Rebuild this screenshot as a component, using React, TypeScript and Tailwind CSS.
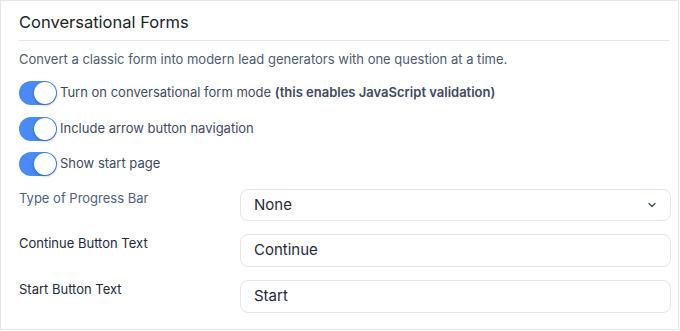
import React from "react";

function Toggle() {
  return (
    <span className="relative inline-flex h-[24px] w-[38px] shrink-0 items-center rounded-full bg-[#4a8af4]">
      <span className="absolute right-[1px] top-[1px] h-[22px] w-[22px] rounded-full bg-white shadow-[0_1px_3px_rgba(0,0,0,0.35)]" />
    </span>
  );
}

function ToggleRow({ children }: { children: React.ReactNode }) {
  return (
    <div className="flex h-[24px] items-center gap-[3px]">
      <Toggle />
      <span className="text-[13px] text-[#3f4a5c]">{children}</span>
    </div>
  );
}

function Field({ label, labelClass, children }: { label: string; labelClass: string; children: React.ReactNode }) {
  return (
    <div className="flex items-start">
      <div className={`w-[221px] shrink-0 text-[13px] leading-[18px] ${labelClass}`}>{label}</div>
      <div className="flex-1">{children}</div>
    </div>
  );
}

export default function App() {
  return (
    <div className="h-[331px] w-[680px] bg-white" style={{ fontFamily: "Inter, 'Noto Sans', sans-serif" }}>
      <div className="h-[330px] w-[679px] border border-[#e6e6e6] bg-white pl-[18px] pr-[7px]">
        <div className="flex h-[39px] items-center pt-[3px] text-[16.5px] text-[#1d2327]">Conversational Forms</div>
        <div className="mr-[1px] h-px bg-[#e6e6e6]" />
        <div className="mt-[9px] text-[13px] leading-[18px] text-[#4f5b6d]">
          Convert a classic form into modern lead generators with one question at a time.
        </div>
        <div className="mt-[13px] flex flex-col gap-[11.5px]">
          <ToggleRow>
            Turn on conversational form mode <b className="font-semibold text-[#3f4a5c]">(this enables JavaScript validation)</b>
          </ToggleRow>
          <ToggleRow>Include arrow button navigation</ToggleRow>
          <ToggleRow>Show start page</ToggleRow>
        </div>
        <div className="mt-[13px] flex flex-col gap-[13px]">
          <Field label="Type of Progress Bar" labelClass="text-[#52607a]">
            <div className="flex h-[32px] items-center justify-between rounded-[8px] border border-[#e5e7eb] pl-[13px] pr-[12px] text-[15px] text-[#1f2937]">
              <span>None</span>
              <svg width="12" height="12" viewBox="0 0 24 24" fill="none" stroke="#3f4a5c" strokeWidth="2.5" strokeLinecap="round" strokeLinejoin="round">
                <path d="M6 9l6 6 6-6" />
              </svg>
            </div>
          </Field>
          <Field label="Continue Button Text" labelClass="text-[#1e293b]">
            <div className="flex h-[33px] items-center rounded-[8px] border border-[#e5e7eb] pl-[13px] text-[15px] text-[#1f2937]">Continue</div>
          </Field>
          <Field label="Start Button Text" labelClass="text-[#1e293b]">
            <div className="flex h-[33px] items-center rounded-[8px] border border-[#e5e7eb] pl-[13px] text-[15px] text-[#1f2937]">Start</div>
          </Field>
        </div>
      </div>
    </div>
  );
}
